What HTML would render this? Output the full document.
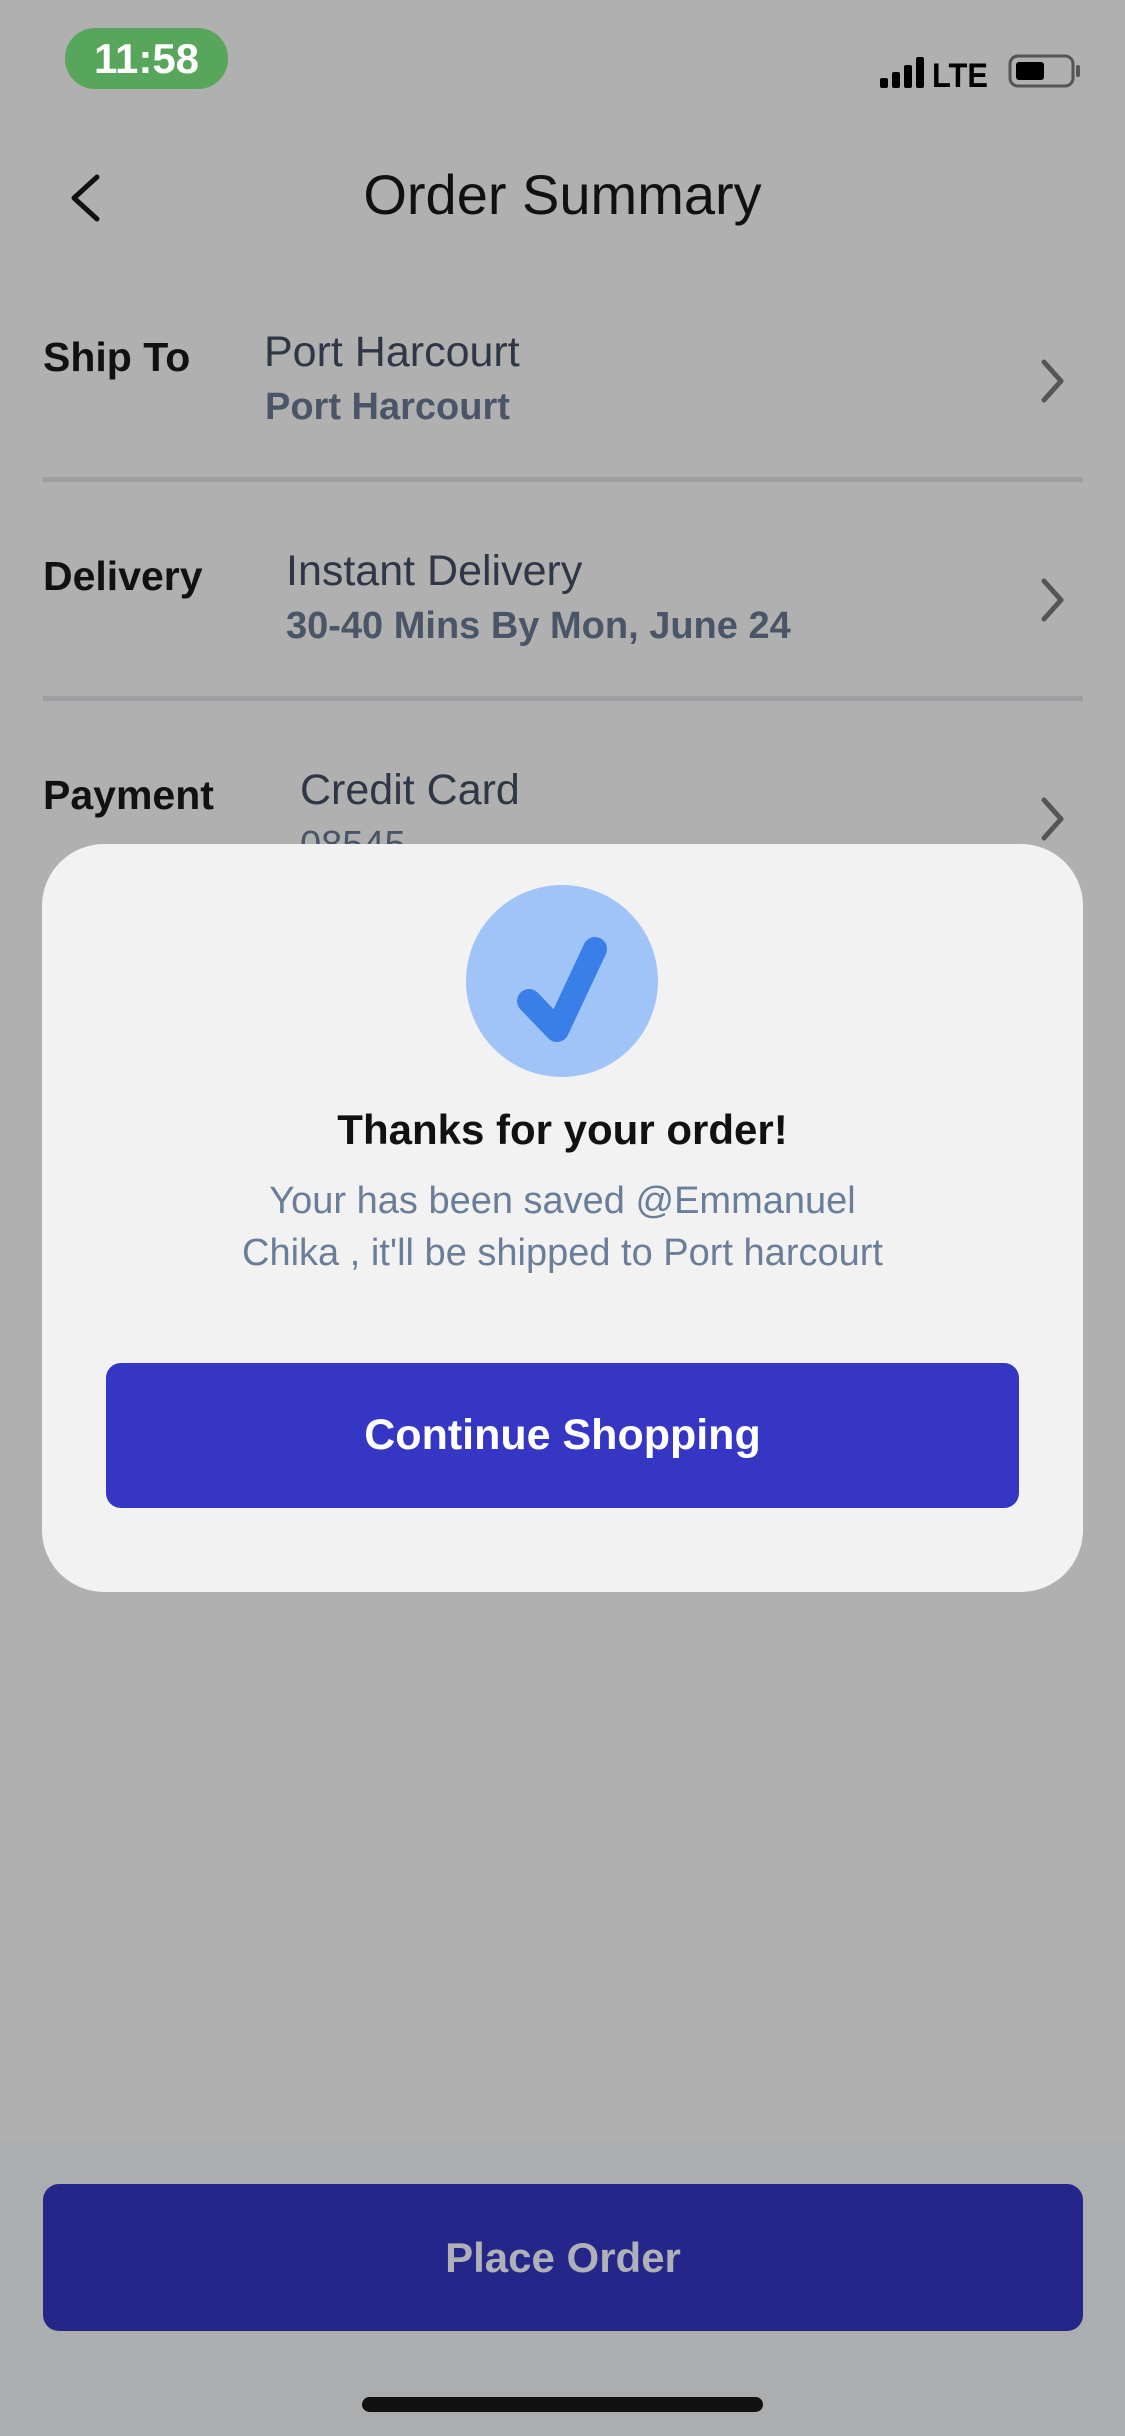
<!DOCTYPE html>
<html><head><meta charset="utf-8"><style>
*{margin:0;padding:0;box-sizing:border-box}
body{width:1125px;height:2436px;background:#b0b0b0;font-family:"Liberation Sans",sans-serif;position:relative;overflow:hidden}
.a{position:absolute;white-space:nowrap}
.lbl{font-weight:bold;font-size:41px;color:#111}
.v1{font-size:43px;color:#2f3747}
.v2{font-size:38px;color:#4a5568;font-weight:bold}
.div{position:absolute;left:43px;width:1040px;height:5px;background:#9d9ea2}
</style></head><body>
<div class="a" style="left:65px;top:28px;width:163px;height:61px;border-radius:30px;background:#58a65b;color:#fff;font-weight:bold;font-size:42px;line-height:61px;text-align:center">11:58</div>
<svg class="a" style="left:880px;top:52px" width="206" height="40" viewBox="0 0 206 40">
<rect x="0" y="26" width="8" height="10" rx="2" fill="#000"/><rect x="12" y="20" width="8" height="16" rx="2" fill="#000"/><rect x="24" y="13" width="8" height="23" rx="2" fill="#000"/><rect x="36" y="5" width="8" height="31" rx="2" fill="#000"/>
<text x="52" y="35" font-family="Liberation Sans" font-weight="bold" font-size="34" fill="#000" textLength="56" lengthAdjust="spacingAndGlyphs">LTE</text>
<rect x="130" y="4" width="63" height="30" rx="8" fill="none" stroke="#555" stroke-width="3"/><rect x="136" y="10" width="28" height="18" rx="3" fill="#000"/><rect x="196" y="13" width="4" height="12" rx="2" fill="#555"/>
</svg>
<svg class="a" style="left:64px;top:174px" width="40" height="50"><path d="M33 3 L10 24 L33 45" fill="none" stroke="#111" stroke-width="5" stroke-linecap="round" stroke-linejoin="round"/></svg>
<div class="a" style="left:0;width:1125px;top:162px;text-align:center;font-size:56px;color:#111">Order Summary</div>

<div class="a lbl" style="left:43px;top:334px">Ship To</div>
<div class="a v1" style="left:264px;top:328px">Port Harcourt</div>
<div class="a v2" style="left:265px;top:386px">Port Harcourt</div>
<div class="div" style="top:477px"></div>

<div class="a lbl" style="left:43px;top:553px">Delivery</div>
<div class="a v1" style="left:286px;top:547px">Instant Delivery</div>
<div class="a v2" style="left:286px;top:605px">30-40 Mins By Mon, June 24</div>
<div class="div" style="top:696px"></div>

<div class="a lbl" style="left:43px;top:772px">Payment</div>
<div class="a v1" style="left:300px;top:766px">Credit Card</div>
<div class="a v2" style="left:300px;top:824px;font-weight:normal">08545</div>

<svg class="a" style="left:1036px;top:356px" width="32" height="50"><path d="M8 6 L25 25 L8 44" fill="none" stroke="#555" stroke-width="5" stroke-linecap="round" stroke-linejoin="round"/></svg>
<svg class="a" style="left:1036px;top:575px" width="32" height="50"><path d="M8 6 L25 25 L8 44" fill="none" stroke="#555" stroke-width="5" stroke-linecap="round" stroke-linejoin="round"/></svg>
<svg class="a" style="left:1036px;top:794px" width="32" height="50"><path d="M8 6 L25 25 L8 44" fill="none" stroke="#555" stroke-width="5" stroke-linecap="round" stroke-linejoin="round"/></svg>

<div class="a" style="left:42px;top:844px;width:1041px;height:748px;border-radius:62px;background:#f2f2f2"></div>
<svg class="a" style="left:466px;top:885px" width="192" height="192" viewBox="0 0 192 192">
<circle cx="96" cy="96" r="96" fill="#a0c4f8"/>
<path d="M63 116 L91 145 L129 64" fill="none" stroke="#3a7fe8" stroke-width="24" stroke-linecap="round" stroke-linejoin="round"/>
</svg>
<div class="a" style="left:0;width:1125px;top:1106px;text-align:center;font-size:42px;font-weight:bold;color:#111">Thanks for your order!</div>
<div class="a" style="left:0;width:1125px;top:1175px;text-align:center;font-size:38px;line-height:52px;color:#6b7e99">Your has been saved @Emmanuel<br>Chika , it'll be shipped to Port harcourt</div>
<div class="a" style="left:106px;top:1363px;width:913px;height:145px;border-radius:15px;background:#3636c4;color:#fff;font-weight:bold;font-size:43px;line-height:145px;text-align:center">Continue Shopping</div>

<div class="a" style="left:0;top:2142px;width:1125px;height:294px;background:#acadaf"></div>
<div class="a" style="left:43px;top:2184px;width:1040px;height:147px;border-radius:16px;background:#242689;color:#b0b0b8;font-weight:bold;font-size:42px;line-height:147px;text-align:center">Place Order</div>
<div class="a" style="left:362px;top:2397px;width:401px;height:15px;border-radius:8px;background:#111"></div>
</body></html>
